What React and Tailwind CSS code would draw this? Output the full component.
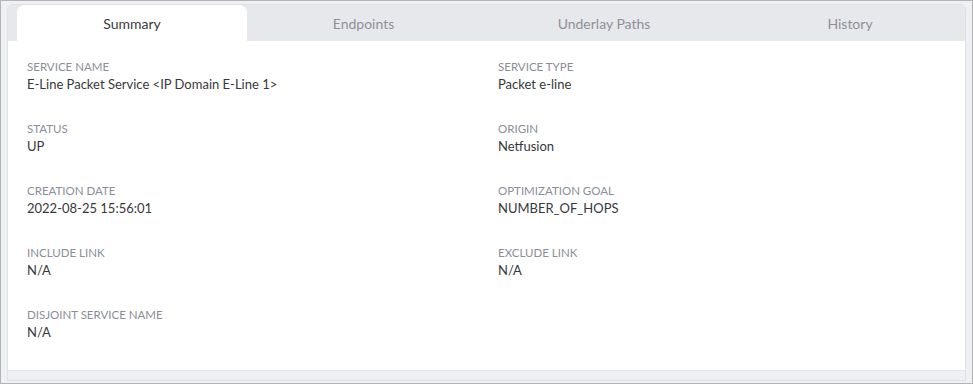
const tabs = [
  { name: "Summary", w: "w-[230px]", active: true },
  { name: "Endpoints", w: "w-[233px]" },
  { name: "Underlay Paths", w: "w-[248px]" },
  { name: "History", w: "w-[244px]" },
];

const rows = [
  [
    { label: "SERVICE NAME", value: "E-Line Packet Service <IP Domain E-Line 1>" },
    { label: "SERVICE TYPE", value: "Packet e-line" },
  ],
  [
    { label: "STATUS", value: "UP" },
    { label: "ORIGIN", value: "Netfusion" },
  ],
  [
    { label: "CREATION DATE", value: "2022-08-25 15:56:01" },
    { label: "OPTIMIZATION GOAL", value: "NUMBER_OF_HOPS" },
  ],
  [
    { label: "INCLUDE LINK", value: "N/A" },
    { label: "EXCLUDE LINK", value: "N/A" },
  ],
  [{ label: "DISJOINT SERVICE NAME", value: "N/A" }, null],
];

const Field = ({ item }) => {
  if (!item) return <div />;
  return (
    <div className="flex flex-col">
      <span className="text-[11.5px] leading-[16px] text-[#8b8e98]">{item.label}</span>
      <span className="text-[13px] leading-[18px] text-[#37383b]">{item.value}</span>
    </div>
  );
};

export default function App() {
  return (
    <div
      className="w-[973px] h-[384px] border border-[#b4b4b4] pl-[6px] pr-[6px] pt-[3px] pb-[2px] bg-[#eef0f3] flex flex-col"
      style={{ fontFamily: "Lato, 'Open Sans', sans-serif" }}
    >
      <div className="flex-1 flex flex-col border border-[#dfe1e6] rounded-t-[6px] overflow-hidden">
        {/* tabs */}
        <div className="flex h-[36px] bg-[#e7e8ec] pl-[9px] shrink-0">
          {tabs.map((t) => (
            <div
              key={t.name}
              className={
                t.active
                  ? `${t.w} shrink-0 flex items-center justify-center bg-white rounded-t-[8px] text-[14px] text-[#3a3b3e]`
                  : `${t.w} shrink-0 flex items-center justify-center text-[14px] text-[#8e9097]`
              }
            >
              {t.name}
            </div>
          ))}
        </div>

        {/* content */}
        <div className="flex-1 bg-white pl-[19px] pt-[18px] mb-[9px] border-b border-[#e3e4e8]">
          <div className="flex flex-col gap-[28px]">
            {rows.map((r, i) => (
              <div key={i} className="grid grid-cols-[471px_1fr]">
                <Field item={r[0]} />
                <Field item={r[1]} />
              </div>
            ))}
          </div>
        </div>
      </div>
    </div>
  );
}
